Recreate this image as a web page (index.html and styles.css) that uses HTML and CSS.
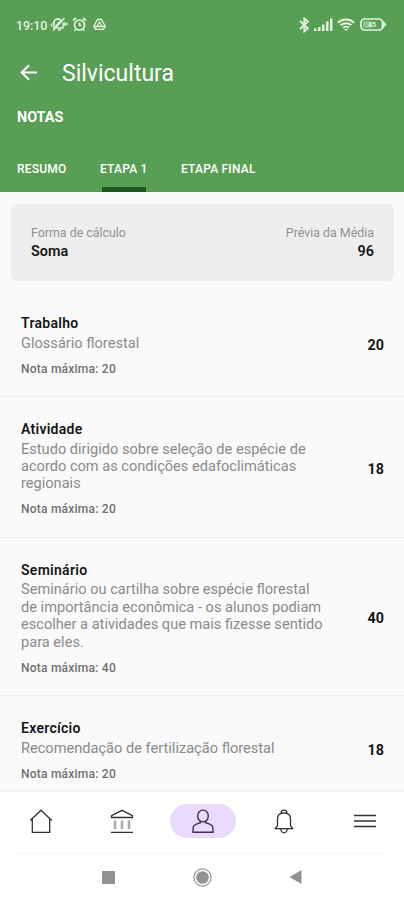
FILE: index.html
```html
<!DOCTYPE html>
<html lang="pt-BR">
<head>
<meta charset="utf-8">
<meta name="viewport" content="width=device-width, initial-scale=1">
<title>Silvicultura</title>
<link rel="stylesheet" href="styles.css">
</head>
<body>
<div class="screen">
  <header class="header">
    <div class="status">
      <div class="status-left">
        <span class="clock">19:10</span>
        <svg class="ic-mute" width="18" height="15" viewBox="0 0 18 15" fill="none" stroke="currentColor" stroke-width="1.500"><path d="M4 11.500V7a4 4 0 0 1 7-3.500M13 5.500V11H6.500M3 13.500L14.500 1M8 13h3M1.500 6.500v3M3.500 5v2M15 5v4M17 6v2M5.500 9.500l6-6.500"/></svg>
        <svg class="ic-alarm" width="15" height="15" viewBox="0 0 15 15" fill="none" stroke="currentColor" stroke-width="1.700"><circle cx="7.500" cy="8" r="5"/><path d="M7.500 5.500V8.500h2M1 3.500L4 1M14 3.500L11 1M3.500 12.500l-1 1.200M11.500 12.500l1 1.200"/></svg>
        <svg class="ic-drive" width="13" height="13" viewBox="0 0 13 13" fill="none" stroke="currentColor" stroke-width="1.300"><path d="M4.500 1.500h4l3.700 6.800-1.700 3h-8l-1.700-3zM4 8.500L6.500 4 9 8.500zM1 8.500h11"/></svg>
      </div>
      <div class="status-right">
        <svg width="11" height="16" viewBox="0 0 11 16" fill="none" stroke="currentColor" stroke-width="1.800"><path d="M1 4l8 7.500L5.300 14.500V1.500L9 4.500 1 12"/></svg>
        <svg class="ic-signal" width="19" height="13" viewBox="0 0 19 13" fill="currentColor"><path d="M0 10.500h2.500V13H0zM4 9h2.500v4H4zM8 6.500h2.500V13H8zM12 3.500h2.500V13H12zM16 .5h2.500V13H16z"/></svg>
        <svg class="ic-wifi" width="18" height="13" viewBox="0 0 18 13" fill="none" stroke="currentColor" stroke-width="1.900"><path d="M.8 4.700a12 12 0 0 1 16.400 0M3.600 7.300a8 8 0 0 1 10.800 0M6.200 9.900a4 4 0 0 1 5.600 0"/><path d="M7 11l2 2 2-2z" fill="currentColor" stroke="none"/></svg>
        <svg class="ic-battery" width="27" height="13" viewBox="0 0 27 13"><rect x="1" y="1" width="21.500" height="11" rx="3.500" fill="none" stroke="currentColor" stroke-width="1.700"/><path d="M23 2.500l3.500 4-3.500 4z" fill="currentColor"/><rect x="3" y="3" width="9" height="7" rx="1.500" fill="#8fc28c"/><text class="battery-text" x="12" y="9.200" text-anchor="middle">45</text></svg>
      </div>
    </div>
    <div class="titlebar">
      <svg width="18" height="17" viewBox="0 0 18 17" fill="none" stroke="currentColor" stroke-width="2"><path d="M17 8.500H2M9 1.200L1.700 8.500 9 15.800"/></svg>
      <h1>Silvicultura</h1>
    </div>
    <div class="subtitle">NOTAS</div>
    <nav class="tabs">
      <span class="tab-summary">RESUMO</span>
      <span class="tab-active">ETAPA 1</span>
      <span class="tab-final">ETAPA FINAL</span>
    </nav>
  </header>
  <main class="content">
    <section class="summary">
      <div><div class="label">Forma de cálculo</div><div class="value">Soma</div></div>
      <div class="right"><div class="label">Prévia da Média</div><div class="value">96</div></div>
    </section>
    <article class="row">
      <div><h2>Trabalho</h2><p class="desc">Glossário florestal</p><p class="note">Nota máxima: 20</p></div>
      <div class="score">20</div>
    </article>
    <article class="row">
      <div><h2>Atividade</h2><p class="desc">Estudo dirigido sobre seleção de espécie de<br>acordo com as condições edafoclimáticas<br>regionais</p><p class="note">Nota máxima: 20</p></div>
      <div class="score">18</div>
    </article>
    <article class="row">
      <div><h2>Seminário</h2><p class="desc">Seminário ou cartilha sobre espécie florestal<br>de importância econômica - os alunos podiam<br>escolher a atividades que mais fizesse sentido<br>para eles.</p><p class="note">Nota máxima: 40</p></div>
      <div class="score">40</div>
    </article>
    <article class="row">
      <div><h2>Exercício</h2><p class="desc">Recomendação de fertilização florestal</p><p class="note">Nota máxima: 20</p></div>
      <div class="score">18</div>
    </article>
  </main>
  <nav class="bottom">
    <span class="item"><svg width="24" height="25" viewBox="0 0 24 25" fill="none" stroke="currentColor" stroke-width="1.300"><path d="M1.200 11.500L12 1.200l10.800 10.300M3.300 10v13.300h17.400V10"/></svg></span>
    <span class="item"><svg width="24" height="25" viewBox="0 0 24 25" fill="none" stroke="currentColor" stroke-width="1.300"><path d="M1.500 8.500V6.700L12 1.300l10.500 5.400v1.800zM1 23.300h22"/><path d="M5 11.500v8.500M12 11.500v8.500M19 11.500v8.500" stroke="#aaa" stroke-width="2.600"/></svg></span>
    <span class="item item-active"><svg width="22" height="25" viewBox="0 0 22 25" fill="none" stroke="currentColor" stroke-width="1.400"><ellipse cx="11" cy="7" rx="5.300" ry="5.900"/><path d="M8.300 12.200v1.500l-4 1.400C2 16 1 17.600 1 20v3.300h20V20c0-2.400-1-4-3.300-4.900l-4-1.400v-1.500"/></svg></span>
    <span class="item"><svg width="20" height="25" viewBox="0 0 20 25" fill="none" stroke="currentColor" stroke-width="1.300"><path d="M3.500 17.500V10c0-4 2.500-6 6.500-6s6.500 2 6.500 6v7.500M.8 19.700h18.400M.8 20.200l2.700-3.500M19.200 20.200l-2.700-3.500M7 4.200a3 3 0 0 1 6 0M6.800 20a3.200 3.800 0 0 0 6.400 0"/></svg></span>
    <span class="item"><svg width="22" height="14" viewBox="0 0 22 14" fill="none" stroke="currentColor" stroke-width="1.400"><path d="M0 1.500h22M0 7h22M0 12.500h22"/></svg></span>
  </nav>
  <div class="system">
    <svg width="13" height="13" viewBox="0 0 13 13"><rect width="13" height="13" rx=".5" fill="#929292"/></svg>
    <svg width="19" height="19" viewBox="0 0 19 19"><circle cx="9.500" cy="9.500" r="8.600" fill="none" stroke="#929292" stroke-width="1.200"/><circle cx="9.500" cy="9.500" r="6.300" fill="#929292"/></svg>
    <svg width="13" height="14" viewBox="0 0 13 14"><path d="M12.500 0v14L.5 7z" fill="#929292"/></svg>
  </div>
</div>
</body>
</html>
```
FILE: styles.css
```css
* { box-sizing: border-box; }
body { margin: 0; background: #fff; font-family: Roboto, "Liberation Sans", sans-serif; }
h1, h2, p { margin: 0; }
svg { display: block; flex: none; }
.screen { width: 404px; height: 900px; display: flex; flex-direction: column; overflow: hidden; white-space: nowrap; }

.header { height: 192px; flex: none; background: #589f55; color: #fff; display: flex; flex-direction: column; }
.header > * { flex: none; }
.status { height: 49px; padding: 0 17px 0 16px; display: flex; justify-content: space-between; align-items: center; color: #e4f2df; }
.status-left, .status-right { display: flex; align-items: center; }
.clock { font-size: 12.5px; font-weight: 500; width: 32px; letter-spacing: -0.1px; padding-top: 1px; }
.ic-mute { margin-left: 2px; }
.ic-alarm { margin-left: 4px; }
.ic-drive { margin-left: 6px; }
.ic-signal { margin-left: 4px; }
.ic-wifi { margin-left: 4px; }
.ic-battery { margin-left: 5px; }
.battery-text { font-size: 7px; font-weight: 700; fill: #e4f2df; }
.titlebar { height: 46px; padding-left: 20px; display: flex; align-items: center; gap: 24px; }
.titlebar h1 { font-size: 23px; font-weight: 400; line-height: 30px; padding-top: 3px; }
.subtitle { height: 46px; line-height: 46px; padding-left: 17px; font-size: 14.4px; font-weight: 700; }
.tabs { height: 51px; display: flex; padding-left: 17px; font-size: 12px; letter-spacing: 0.2px; font-weight: 500; }
.tabs span { padding-top: 5px; line-height: 46px; }
.tab-summary { width: 83px; }
.tab-active { width: 81px; background: linear-gradient(#1f541f, #1f541f) 2px 100% / 44px 5px no-repeat; }

.content { height: 598px; flex: none; background: #fafafa; overflow: hidden; }
.summary { height: 77px; margin: 12px 10px 10px 11px; padding: 20px 20px 0 20px; border-radius: 6px; background: #eee; display: flex; justify-content: space-between; }
.right { text-align: right; }
.label { font-size: 12.4px; line-height: 18px; color: #929292; }
.value { font-size: 14.4px; line-height: 19px; font-weight: 600; color: #161616; }
.row { display: flex; justify-content: space-between; align-items: center; padding: 22px 20px 19.5px 21px; border-bottom: 1px solid #eee; }
.row h2 { font-size: 14px; letter-spacing: 0.28px; line-height: 20px; font-weight: 600; color: #161616; }
.desc { margin-top: 1.5px; font-size: 14.6px; line-height: 17.4px; color: #8a8a8a; }
.note { margin-top: 8.6px; font-size: 12px; letter-spacing: 0.23px; line-height: 16px; font-weight: 500; color: #707070; }
.score { padding-top: 1px; font-size: 14.3px; font-weight: 700; color: #161616; }

.bottom { height: 63px; flex: none; border-top: 2px solid #f1f1f1; background: #fff; display: grid; grid-template-columns: repeat(5, 81px); justify-content: center; align-items: center; padding-left: 1px; color: #333; }
.item { height: 34px; display: flex; align-items: center; justify-content: center; justify-self: center; margin-top: -3px; }
.item-active { width: 66px; border-radius: 17px; background: #e8dbfb; color: #46304f; }
.system { height: 47px; flex: none; margin: 0 16px; padding: 0 86px; border-top: 1px solid #f5f5f5; display: flex; align-items: center; justify-content: space-between; }
```
